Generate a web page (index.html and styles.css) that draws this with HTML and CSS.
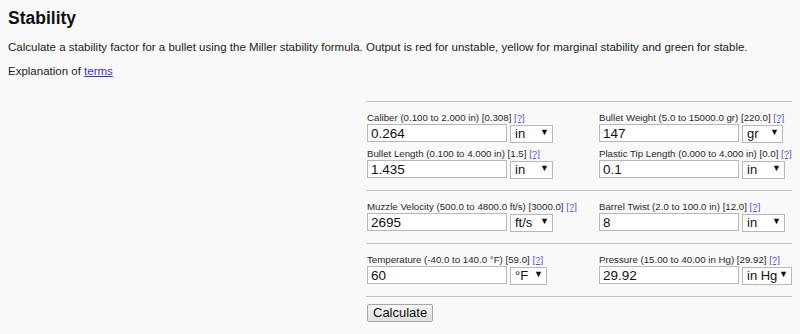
FILE: index.html
```html
<!DOCTYPE html>
<html lang="en">
<head>
  <meta charset="UTF-8" />
  <title>Stability</title>
  <link rel="stylesheet" href="styles.css">
</head>
<body>

  <h1>Stability</h1>
  <p class="intro">Calculate a stability factor for a bullet using the Miller stability formula. Output is red for unstable, yellow for marginal stability and green for stable.</p>
  <p class="intro">Explanation of <a href="#">terms</a></p>

  <form class="calc">
    <div class="section">
      <div class="field">
        <label>Caliber (0.100 to 2.000 in) [0.308] <a href="#">[?]</a></label>
        <div class="control">
          <input type="text" value="0.264" />
          <span class="unit"><select><option>in</option></select></span>
        </div>
      </div>
      <div class="field">
        <label>Bullet Weight (5.0 to 15000.0 gr) [220.0] <a href="#">[?]</a></label>
        <div class="control">
          <input type="text" value="147" />
          <span class="unit unit-gr"><select><option>gr</option></select></span>
        </div>
      </div>
      <div class="field">
        <label>Bullet Length (0.100 to 4.000 in) [1.5] <a href="#">[?]</a></label>
        <div class="control">
          <input type="text" value="1.435" />
          <span class="unit"><select><option>in</option></select></span>
        </div>
      </div>
      <div class="field">
        <label>Plastic Tip Length (0.000 to 4.000 in) [0.0] <a href="#">[?]</a></label>
        <div class="control">
          <input type="text" value="0.1" />
          <span class="unit"><select><option>in</option></select></span>
        </div>
      </div>
    </div>

    <div class="section">
      <div class="field">
        <label>Muzzle Velocity (500.0 to 4800.0 ft/s) [3000.0] <a href="#">[?]</a></label>
        <div class="control">
          <input type="text" value="2695" />
          <span class="unit"><select><option>ft/s</option></select></span>
        </div>
      </div>
      <div class="field">
        <label>Barrel Twist (2.0 to 100.0 in) [12.0] <a href="#">[?]</a></label>
        <div class="control">
          <input type="text" value="8" />
          <span class="unit"><select><option>in</option></select></span>
        </div>
      </div>
    </div>

    <div class="section">
      <div class="field">
        <label>Temperature (-40.0 to 140.0 °F) [59.0] <a href="#">[?]</a></label>
        <div class="control">
          <input type="text" value="60" />
          <span class="unit unit-sm"><select><option>°F</option></select></span>
        </div>
      </div>
      <div class="field">
        <label>Pressure (15.00 to 40.00 in Hg) [29.92] <a href="#">[?]</a></label>
        <div class="control">
          <input type="text" value="29.92" />
          <span class="unit unit-wide"><select><option>in Hg</option></select></span>
        </div>
      </div>
    </div>

    <div class="actions">
      <button type="button">Calculate</button>
    </div>
  </form>

</body>
</html>
```

FILE: styles.css
```css
body {
  margin: 8px;
  font-family: 'Liberation Sans', Arial, sans-serif;
  background: #f9f9f9;
  color: #222;
}

h1 {
  margin: 0;
  font-size: 17.5px;
  font-weight: bold;
  color: #111;
}

.intro {
  margin: 12px 0 0;
  font-size: 11.5px;
}

.intro + .intro {
  margin-top: 12px;
}

a {
  color: #3333cc;
}

.calc {
  width: 426px;
  margin: 24px 0 0 auto;
}

.section {
  display: grid;
  grid-template-columns: 232px 194px;
  row-gap: 6px;
  padding: 10px 0 12px;
  border-top: 1px solid #c4c4c4;
  border-bottom: 1px solid #ececec;
  margin-bottom: -1px;
}

.field {
  padding-left: 1px;
}

.field label {
  display: block;
  height: 12px;
  line-height: 12px;
  font-size: 9.7px;
  color: #2a2a2a;
  white-space: nowrap;
}

.field label a {
  color: #5555cc;
}

.control {
  display: flex;
  align-items: center;
  gap: 3px;
}

.control input {
  box-sizing: border-box;
  width: 140px;
  height: 18px;
  margin: 0;
  padding: 0 3px;
  border: 1px solid #b8b8b8;
  background: #fff;
  font-family: inherit;
  font-size: 13.5px;
  color: #111;
}

.unit {
  position: relative;
  display: inline-block;
  width: 43px;
  height: 18px;
}

.unit-gr {
  width: 41px;
}

.unit-sm {
  width: 37px;
}

.unit-wide {
  width: 50px;
}

.unit select {
  box-sizing: border-box;
  width: 100%;
  height: 18px;
  margin: 0;
  padding: 0 0 0 4px;
  border: 1px solid #b8b8b8;
  border-radius: 0;
  background: #fff;
  font-family: inherit;
  font-size: 13px;
  color: #111;
  appearance: none;
  -webkit-appearance: none;
}

.unit::after {
  content: "\25BC";
  position: absolute;
  right: 4px;
  top: 3px;
  font-size: 9px;
  line-height: 11px;
  color: #111;
  pointer-events: none;
}

.actions {
  border-top: 1px solid #c4c4c4;
  padding-top: 6px;
}

.actions button {
  height: 18px;
  padding: 0 5px;
  margin-left: 1px;
  font-family: inherit;
  font-size: 13px;
  color: #111;
  background: linear-gradient(#f6f6f6, #dedede);
  border: 1px solid #a8a8a8;
  border-radius: 2px;
}
```
